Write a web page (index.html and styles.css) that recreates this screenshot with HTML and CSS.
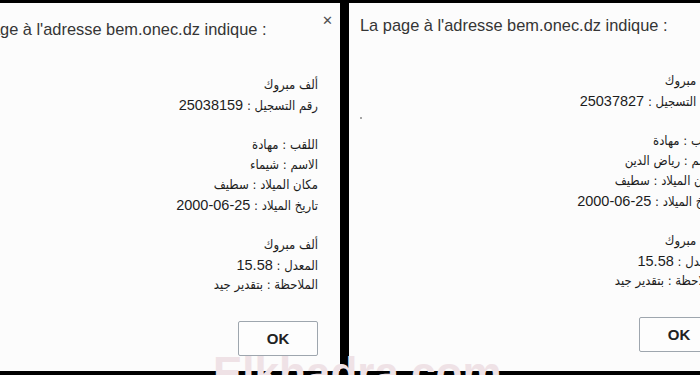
FILE: index.html
```html
<!DOCTYPE html>
<html lang="fr">
<head>
<meta charset="utf-8">
<title>bem.onec.dz</title>
<link rel="stylesheet" href="styles.css">
</head>
<body>
<div class="screen">
  <div class="panel panel-left">
    <div class="dialog dialog-left">
      <div class="dialog-head">
        <div class="dialog-title">La page à l'adresse bem.onec.dz indique :</div>
        <div class="dialog-close">✕</div>
      </div>
      <div class="dialog-body" dir="rtl">
        <div class="line">ألف مبروك</div>
        <div class="line">رقم التسجيل : <span class="num">25038159</span></div>
        <div class="line blank"></div>
        <div class="line">اللقب : مهادة</div>
        <div class="line">الاسم : شيماء</div>
        <div class="line">مكان الميلاد : سطيف</div>
        <div class="line">تاريخ الميلاد : <span class="num">25-06-2000</span></div>
        <div class="line blank"></div>
        <div class="line">ألف مبروك</div>
        <div class="line">المعدل : <span class="num">15.58</span></div>
        <div class="line">الملاحظة : بتقدير جيد</div>
      </div>
      <div class="dialog-foot">
        <div class="ok-btn">OK</div>
      </div>
    </div>
  </div>
  <div class="panel panel-right">
    <div class="dialog dialog-right">
      <div class="dialog-head">
        <div class="dialog-title">La page à l'adresse bem.onec.dz indique :</div>
        <div class="dialog-close">✕</div>
      </div>
      <div class="dialog-body" dir="rtl">
        <div class="line">ألف مبروك</div>
        <div class="line">رقم التسجيل : <span class="num">25037827</span></div>
        <div class="line blank"></div>
        <div class="line">اللقب : مهادة</div>
        <div class="line">الاسم : رياض الدين</div>
        <div class="line">مكان الميلاد : سطيف</div>
        <div class="line">تاريخ الميلاد : <span class="num">25-06-2000</span></div>
        <div class="line blank"></div>
        <div class="line">ألف مبروك</div>
        <div class="line">المعدل : <span class="num">15.58</span></div>
        <div class="line">الملاحظة : بتقدير جيد</div>
      </div>
      <div class="dialog-foot">
        <div class="ok-btn">OK</div>
      </div>
    </div>
    <span class="speck"></span>
  </div>
  <div class="watermark">Elkhadra.com</div>
</div>
</body>
</html>
```

FILE: styles.css
```css
* { box-sizing: border-box; }
html, body { margin: 0; padding: 0; background: #000; }

.screen {
  position: relative;
  width: 700px;
  height: 375px;
  overflow: hidden;
  background: #000;
  display: flex;
  gap: 9px;
  padding: 3px 0 4px 0;
}

.panel {
  position: relative;
  overflow: hidden;
  background: #fcfcfc;
  display: flex;
  align-items: flex-start;
}
.panel-left { width: 340px; }
.panel-right { width: 351px; }

.dialog {
  flex: none;
  width: 400px;
  background: #fcfcfc;
  color: #1e1e1e;
}
.dialog-left { margin-left: -52px; margin-top: 4px; }
.dialog-right { margin-left: 0; }

.dialog-head {
  display: flex;
  justify-content: space-between;
  align-items: flex-start;
  padding: 12px 15px 0 11px;
}
.dialog-title {
  font-family: "Liberation Sans", Arial, sans-serif;
  font-size: 16.4px;
  line-height: 20px;
  color: #353535;
  white-space: nowrap;
}
.dialog-close {
  font-family: "DejaVu Sans", sans-serif;
  font-size: 13px;
  font-weight: bold;
  line-height: 14px;
  color: #505050;
  margin-top: -5px;
}

.dialog-body {
  margin-top: 36px;
  padding-right: 30px;
  text-align: right;
  font-family: "DejaVu Sans Condensed", "DejaVu Sans", sans-serif;
  font-size: 13px;
  line-height: 20px;
  color: #1c1c1c;
}
.line { height: 20px; white-space: nowrap; }
.num {
  font-family: "Liberation Sans", Arial, sans-serif;
  font-size: 14.5px;
}

.dialog-foot {
  display: flex;
  justify-content: flex-end;
  padding: 26px 30px 20px 0;
}
.ok-btn {
  width: 80px;
  height: 35px;
  border: 1px solid #9ea6ae;
  border-radius: 2px;
  background: #fdfdfd;
  display: flex;
  align-items: center;
  justify-content: center;
  font-family: "Liberation Sans", Arial, sans-serif;
  font-weight: bold;
  font-size: 15px;
  color: #222;
}

.speck {
  position: absolute;
  left: 11px;
  top: 114px;
  width: 2px;
  height: 2px;
  border-radius: 1px;
  background: #888;
}

.watermark {
  position: absolute;
  left: 213px;
  top: 351px;
  font-family: "Liberation Sans", Arial, sans-serif;
  font-weight: bold;
  font-size: 44px;
  line-height: 44px;
  color: #efe2e6;
  white-space: nowrap;
}
```
